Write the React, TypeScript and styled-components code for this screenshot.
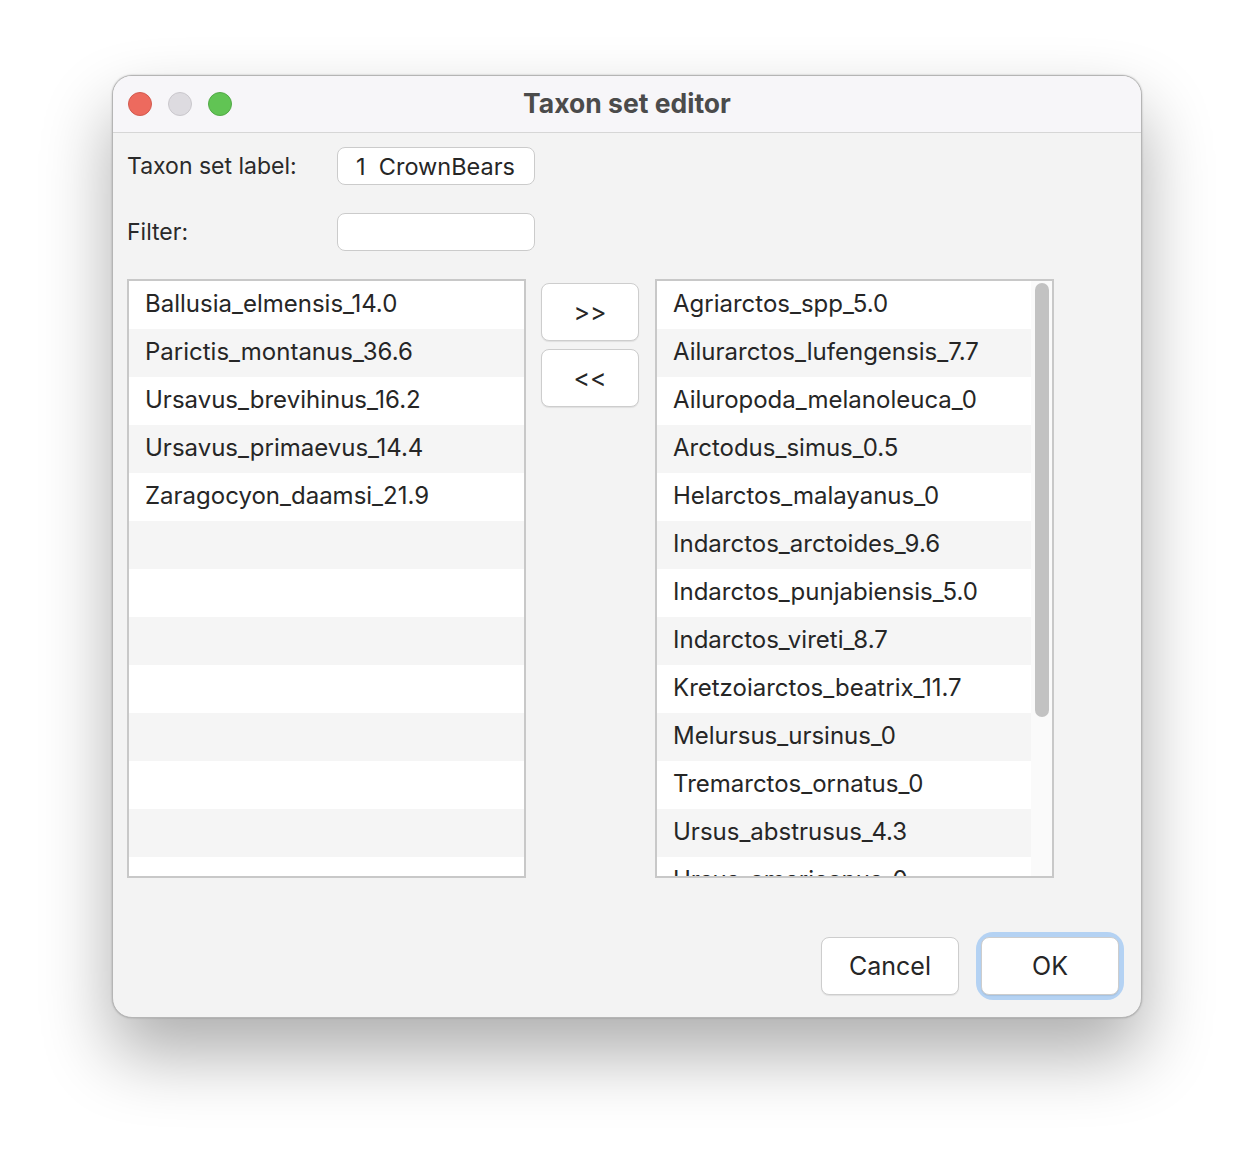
import * as React from 'react'
import styled, { createGlobalStyle } from 'styled-components'

const GlobalStyle = createGlobalStyle`
  html, body {
    margin: 0;
    background: #ffffff;
    font-family: Inter, "Noto Sans", "Liberation Sans", sans-serif;
  }
`

const leftTaxa = [
  'Ballusia_elmensis_14.0',
  'Parictis_montanus_36.6',
  'Ursavus_brevihinus_16.2',
  'Ursavus_primaevus_14.4',
  'Zaragocyon_daamsi_21.9',
]

const rightTaxa = [
  'Agriarctos_spp_5.0',
  'Ailurarctos_lufengensis_7.7',
  'Ailuropoda_melanoleuca_0',
  'Arctodus_simus_0.5',
  'Helarctos_malayanus_0',
  'Indarctos_arctoides_9.6',
  'Indarctos_punjabiensis_5.0',
  'Indarctos_vireti_8.7',
  'Kretzoiarctos_beatrix_11.7',
  'Melursus_ursinus_0',
  'Tremarctos_ornatus_0',
  'Ursus_abstrusus_4.3',
  'Ursus_americanus_0',
]

const Page = styled.div`
  display: flex;
  justify-content: center;
  padding-top: 75px;
  height: 1091px;
`

const Window = styled.div`
  width: 1030px;
  height: 943px;
  box-sizing: border-box;
  border-radius: 20px;
  border: 1px solid #b5b5b5;
  background: #f3f3f3;
  box-shadow: 0 36px 70px rgba(0, 0, 0, 0.32), 0 0 2px rgba(0, 0, 0, 0.25);
  display: flex;
  flex-direction: column;
  overflow: hidden;
`

const TitleBar = styled.div`
  height: 56px;
  flex-shrink: 0;
  background: #f7f6f9;
  border-bottom: 1px solid #d6d6d6;
  display: grid;
  grid-template-columns: 1fr auto 1fr;
  align-items: center;
  padding: 0 15px;
`

const Lights = styled.div`
  display: flex;
  gap: 16px;
`

const Light = styled.span<{ color: string; ring: string }>`
  width: 24px;
  height: 24px;
  border-radius: 50%;
  box-sizing: border-box;
  background: ${({ color }) => color};
  border: 1px solid ${({ ring }) => ring};
`

const Title = styled.div`
  font-size: 26.5px;
  font-weight: 700;
  color: #4b4b4b;
  margin-top: -2px;
`

const Body = styled.div`
  flex: 1;
  display: flex;
  flex-direction: column;
  padding: 14px 22px 22px 14px;
`

const FieldRow = styled.div`
  display: grid;
  grid-template-columns: 210px 198px;
  align-items: center;
  margin-bottom: 28px;
`

const Label = styled.label`
  font-size: 23px;
  color: #2a2a2a;
`

const TextBox = styled.div`
  height: 38px;
  box-sizing: border-box;
  background: #ffffff;
  border: 1.5px solid #cbcbcb;
  border-radius: 8px;
  font-size: 23.5px;
  color: #262626;
  padding-left: 18px;
  display: flex;
  align-items: center;
  white-space: pre;
`

const Lists = styled.div`
  display: flex;
  align-items: flex-start;
  gap: 15px;
`

const ListBox = styled.div`
  width: 399px;
  height: 599px;
  box-sizing: border-box;
  border: 2px solid #c8c8c8;
  background: #ffffff;
  display: flex;
  overflow: hidden;
`

const Rows = styled.div`
  flex: 1;
  overflow: hidden;
`

const Row = styled.div<{ odd: boolean }>`
  height: 48px;
  line-height: 46px;
  padding-left: 16px;
  font-size: 24px;
  color: #262626;
  background: ${({ odd }) => (odd ? '#f5f5f5' : '#ffffff')};
  white-space: nowrap;
`

const ScrollTrack = styled.div`
  width: 21px;
  flex-shrink: 0;
  background: #fafafa;
  padding: 2px 3px 0 4px;
  box-sizing: border-box;
`

const ScrollThumb = styled.div`
  height: 434px;
  border-radius: 7px;
  background: #c2c2c2;
`

const Mover = styled.div`
  display: flex;
  flex-direction: column;
  gap: 8px;
  padding-top: 4px;
  margin-right: 1px;
`

const PushButton = styled.button<{ wide?: boolean }>`
  width: ${({ wide }) => (wide ? '138px' : '98px')};
  height: 58px;
  box-sizing: border-box;
  background: #ffffff;
  border: 1.5px solid #cdcdcd;
  border-radius: 8px;
  font-family: inherit;
  font-size: 25px;
  color: #262626;
  padding: 0;
  box-shadow: 0 1px 1px rgba(0, 0, 0, 0.08);
`

const Footer = styled.div`
  margin-top: auto;
  display: flex;
  justify-content: flex-end;
  gap: 22px;
`

const FocusRing = styled.div`
  border-radius: 12px;
  box-shadow: 0 0 0 5px #b4d2f3;
  display: flex;
`

const List = ({ items, minRows, scroll }: { items: string[]; minRows: number; scroll?: boolean }) => {
  const rows = [...items]
  while (rows.length < minRows) rows.push('')
  return (
    <ListBox>
      <Rows>
        {rows.map((name, i) => (
          <Row key={i} odd={i % 2 === 1}>
            {name || '\u00a0'}
          </Row>
        ))}
      </Rows>
      {scroll && (
        <ScrollTrack>
          <ScrollThumb />
        </ScrollTrack>
      )}
    </ListBox>
  )
}

export default function App() {
  return (
    <>
      <GlobalStyle />
      <Page>
        <Window>
          <TitleBar>
            <Lights>
              <Light color="#ed6a5e" ring="#d25a4f" />
              <Light color="#dddbe0" ring="#c9c7cc" />
              <Light color="#61c454" ring="#52a947" />
            </Lights>
            <Title>Taxon set editor</Title>
            <span />
          </TitleBar>
          <Body>
            <FieldRow>
              <Label>Taxon set label:</Label>
              <TextBox>{'1  CrownBears'}</TextBox>
            </FieldRow>
            <FieldRow>
              <Label>Filter:</Label>
              <TextBox />
            </FieldRow>
            <Lists>
              <List items={leftTaxa} minRows={13} />
              <Mover>
                <PushButton>&gt;&gt;</PushButton>
                <PushButton>&lt;&lt;</PushButton>
              </Mover>
              <List items={rightTaxa} minRows={13} scroll />
            </Lists>
            <Footer>
              <PushButton wide>Cancel</PushButton>
              <FocusRing>
                <PushButton wide>OK</PushButton>
              </FocusRing>
            </Footer>
          </Body>
        </Window>
      </Page>
    </>
  )
}
